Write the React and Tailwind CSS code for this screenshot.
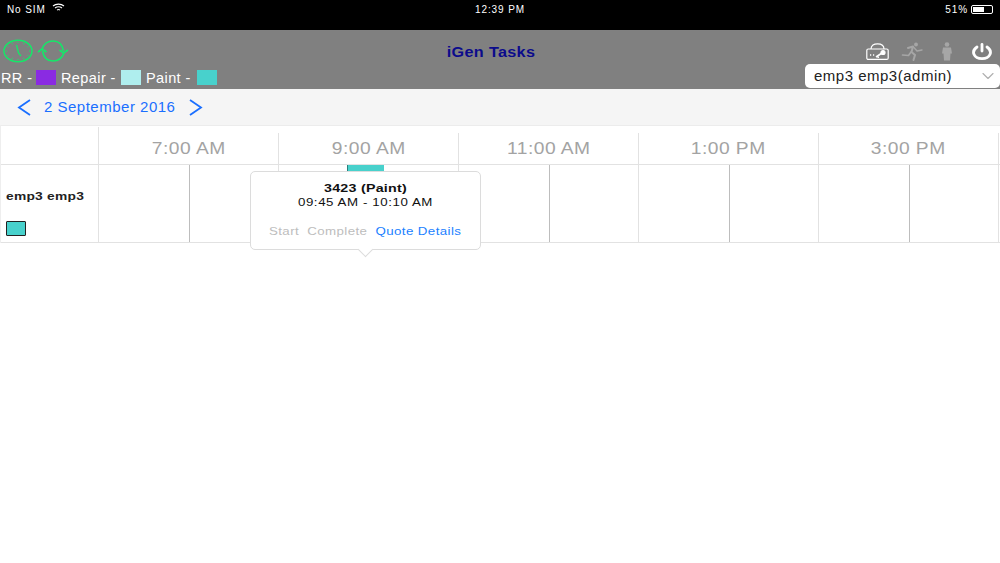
import { ChevronDown } from "lucide-react";

const hours = ["7:00 AM", "9:00 AM", "11:00 AM", "1:00 PM", "3:00 PM"];

function ClockIcon() {
  const ticks = Array.from({ length: 12 }, (_, i) => (i * Math.PI) / 6);
  return (
    <svg width="30" height="24" viewBox="0 0 30 24" fill="none" stroke="#14e868">
      <ellipse cx="15" cy="12" rx="14" ry="10.8" strokeWidth="1.5" />
      {ticks.map((a, i) => (
        <circle key={i} cx={15 + Math.sin(a) * 11.5} cy={12 - Math.cos(a) * 8.5} r="0.6" fill="#14e868" stroke="none" />
      ))}
      <path d="M13.5 6 L15.5 14 L18 17" strokeWidth="1.3" />
    </svg>
  );
}

function RefreshIcon() {
  return (
    <svg width="32" height="22" viewBox="0 0 32 22" fill="none" stroke="#14e868" strokeWidth="1.6">
      <path d="M5 9 C7 3.5 11 1 16 1 C22 1 25.5 5 26.5 11" />
      <path d="M27 13 C25 18.5 21 21 16 21 C10 21 6.5 17 5.5 11" />
      <path d="M22.5 10 L26.5 13 L31 10" />
      <path d="M1 12 L5 9 L9.5 12" />
    </svg>
  );
}

function LockKeyIcon() {
  return (
    <svg width="23" height="17" viewBox="0 0 23 17" fill="none" stroke="#fff" strokeWidth="1.2">
      <path d="M5 6 C5 2.5 8 0.8 11.5 0.8 C15 0.8 18 2.5 18 6" />
      <rect x="0.8" y="6" width="21.4" height="10.4" rx="1.5" />
      <circle cx="17" cy="9.5" r="2" fill="#fff" />
      <path d="M16 10 L10 14 M11.5 13 L12.5 15" strokeWidth="1.6" />
      <path d="M4 12 h1.2 M7 12 h1.2" strokeWidth="1.5" />
    </svg>
  );
}

function RunnerIcon() {
  return (
    <svg width="23" height="19" viewBox="0 0 23 19" fill="none" stroke="#a6a6a6" strokeWidth="2" strokeLinecap="round" strokeLinejoin="round">
      <circle cx="15" cy="2.5" r="1.9" fill="#a6a6a6" stroke="none" />
      <path d="M7 6 L12 4.5 L10.5 10 L14 13 L12.5 18" />
      <path d="M12.5 5 L16 9 L21 8" strokeWidth="1.4" />
      <path d="M10 10 L7.5 13.5 L1.5 13" strokeWidth="1.6" />
    </svg>
  );
}

function PersonIcon() {
  return (
    <svg width="12" height="19" viewBox="0 0 12 19" fill="#a6a6a6">
      <circle cx="6" cy="2.5" r="2.3" />
      <path d="M2 5.5 H10 L11 11.5 H9.5 L9 18.5 H3 L2.5 11.5 H1 Z" />
    </svg>
  );
}

function PowerIcon() {
  return (
    <svg width="22" height="17" viewBox="0 0 22 17" fill="none" stroke="#fff" strokeWidth="2.8" strokeLinecap="round">
      <path d="M6 4 C-0.5 8.5 3 15.6 11 15.6 C19 15.6 22.5 8.5 16 4" />
      <path d="M11 1.5 V8" />
    </svg>
  );
}

function StatusBar() {
  return (
    <div className="h-[30px] bg-black text-white text-[10px] flex justify-between px-[7px] pt-[2px] tracking-[0.9px]">
      <div className="flex items-start gap-[6px] w-[200px]">
        <span>No SIM</span>
        <svg className="mt-[1px]" width="13" height="9" viewBox="0 0 13 9" fill="none" stroke="#fff" strokeWidth="1.1">
          <path d="M1 3 C4 0.5 9 0.5 12 3" />
          <path d="M3 5 C5 3.6 8 3.6 10 5" />
          <path d="M5 7 C6 6.4 7 6.4 8 7" />
        </svg>
      </div>
      <span className="font-medium">12:39 PM</span>
      <div className="flex items-start justify-end gap-[3px] w-[200px]">
        <span>51%</span>
        <div className="mt-[3px] w-[22px] h-[9px] rounded-[2px] border border-white p-[1px]">
          <div className="h-full w-[11px] bg-white" />
        </div>
      </div>
    </div>
  );
}

function Header() {
  return (
    <div className="h-[59px] bg-[#808080] flex flex-col pt-[8px]">
      <div className="flex items-center h-[26px] pl-[3px] pr-[7px]">
        <div className="flex items-center gap-[4px] w-[433px]">
          <ClockIcon />
          <RefreshIcon />
        </div>
        <div className="w-[110px] pt-[2px] text-center text-[14px] font-bold tracking-[0.3px] text-[#0b0b8c] scale-x-[1.155]">iGen Tasks</div>
        <div className="ml-auto flex items-center">
          <LockKeyIcon />
          <div className="ml-[12px]"><RunnerIcon /></div>
          <div className="ml-[17px]"><PersonIcon /></div>
          <div className="ml-[18px]"><PowerIcon /></div>
        </div>
      </div>
      <div className="flex justify-between items-start pl-[1px]">
        <div className="flex items-center text-[14.5px] tracking-[0.4px] text-white h-[15px] mt-[6px]">
          <span className="w-[30px] pt-[3px] whitespace-nowrap">RR -</span>
          <span className="ml-[5px] w-[20px] h-[15px] bg-[#8a2be2]" />
          <span className="ml-[5px] w-[55px] pt-[3px] whitespace-nowrap">Repair -</span>
          <span className="ml-[5px] w-[20px] h-[15px] bg-[#afeeee]" />
          <span className="ml-[5px] w-[46px] pt-[3px] whitespace-nowrap">Paint -</span>
          <span className="ml-[5px] w-[20px] h-[15px] bg-[#48d1cc]" />
        </div>
        <div className="w-[195px] h-[24px] bg-white rounded-[5px] flex items-center justify-between pl-[9px] pr-[2px] text-[15px] tracking-[0.5px] text-[#222]">
          <span>emp3 emp3(admin)</span>
          <ChevronDown size={20} strokeWidth={1.4} className="text-[#b0b0b0]" />
        </div>
      </div>
    </div>
  );
}

function DateBar() {
  return (
    <div className="h-[36px] bg-[#f5f5f5] flex items-center text-[#1a6fff] pl-[17px]">
      <svg width="14" height="17" viewBox="0 0 14 17" fill="none" stroke="currentColor" strokeWidth="1.8">
        <path d="M13 1 L2 8.5 L13 16" />
      </svg>
      <span className="ml-[13px] text-[15px] tracking-[0.5px]">2 September 2016</span>
      <svg className="ml-[14px]" width="14" height="17" viewBox="0 0 14 17" fill="none" stroke="currentColor" strokeWidth="1.8">
        <path d="M1 1 L12 8.5 L1 16" />
      </svg>
    </div>
  );
}

function Popover() {
  return (
    <div className="absolute left-[249px] top-[6px] w-[231px] h-[79px] bg-white border border-[#dcdcdc] rounded-[5px] flex flex-col items-center pt-[9px]">
      <div className="text-[11.5px] leading-[14px] font-bold tracking-[0.2px] text-[#111] scale-x-[1.24]">3423 (Paint)</div>
      <div className="text-[11.5px] leading-[14px] tracking-[0.5px] text-[#111] scale-x-[1.155]">09:45 AM - 10:10 AM</div>
      <div className="mt-[15px] flex gap-[7px] text-[11.5px] leading-[14px] tracking-[0.35px] scale-x-[1.157]">
        <span className="text-[#bdbdbd]">Start</span>
        <span className="text-[#bdbdbd]">Complete</span>
        <span className="text-[#1a7fff]">Quote Details</span>
      </div>
      <div className="absolute -bottom-[6px] left-[109px] w-[11px] h-[11px] rotate-45 bg-white border-r border-b border-[#dcdcdc]" />
    </div>
  );
}

function Grid() {
  return (
    <div className="relative border-l border-[#eeeeee]">
      <div className="flex h-[40px] border-b border-t border-[#ececec] border-b-[#e2e2e2]">
        <div className="w-[98px] border-r border-[#e2e2e2] mt-[1px]" />
        {hours.map((h) => (
          <div key={h} className="w-[180px] border-r border-[#e2e2e2] mt-[7px] flex items-center justify-center text-[16px] tracking-[0.4px] text-[#a3a3a3]">
            <span className="scale-x-[1.2] whitespace-nowrap">{h}</span>
          </div>
        ))}
      </div>
      <div className="flex h-[78px] border-b border-[#e2e2e2] relative">
        <div className="w-[98px] border-r border-[#e2e2e2] pl-[5px] flex flex-col">
          <div className="mt-[24px] text-[11.5px] leading-[14px] font-bold tracking-[0.2px] text-[#222] origin-left scale-x-[1.2] whitespace-nowrap">emp3 emp3</div>
          <div className="mt-[18px] w-[20px] h-[15px] bg-[#48d1cc] border border-[#222] rounded-[1px]" />
        </div>
        {hours.map((h) => (
          <div key={h} className="w-[180px] border-r border-[#e2e2e2] flex">
            <div className="w-[91px] border-r border-[#bdbdbd]" />
          </div>
        ))}
        <div className="absolute left-[346px] top-0 w-[37px] h-[8px] bg-[#48d1cc] border-l border-[#2b7f7c]" />
        <Popover />
      </div>
    </div>
  );
}

export default function App() {
  return (
    <div className="w-[1000px] h-[563px] overflow-hidden bg-white font-['Liberation_Sans',sans-serif]">
      <StatusBar />
      <Header />
      <DateBar />
      <Grid />
    </div>
  );
}
